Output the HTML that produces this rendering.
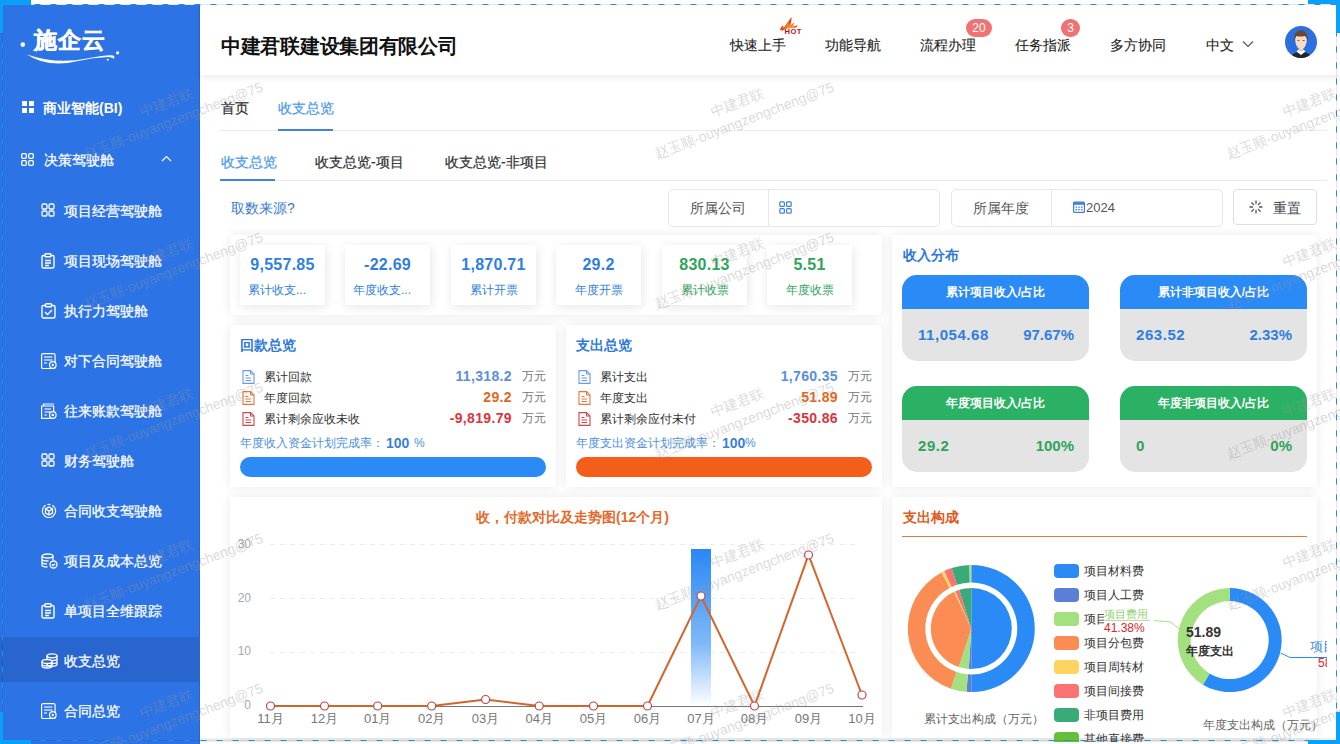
<!DOCTYPE html>
<html><head><meta charset="utf-8">
<style>
*{margin:0;padding:0;box-sizing:border-box}
html,body{width:1340px;height:744px;overflow:hidden;background:#fff;font-family:"Liberation Sans",sans-serif;position:relative}
.a{position:absolute;white-space:nowrap}
#side{position:absolute;left:0;top:5px;width:200px;height:739px;background:#2c73e6;color:#fff}
.si{position:absolute;left:0;width:200px;height:45px}
.si .t{position:absolute;left:64px;top:0;font-size:14px;line-height:45px;color:#fff}
.si svg{position:absolute;left:40px;top:15px}
#hdr{position:absolute;left:200px;top:5px;width:1140px;height:70px;background:#fff;box-shadow:0 3px 6px rgba(0,0,0,0.07)}
.nav{position:absolute;top:30px;font-size:14px;color:#222;line-height:20px;-webkit-text-stroke:0.1px #222}
.badge{position:absolute;height:18px;border-radius:9px;background:#f07373;color:#fff;font-size:12px;line-height:18px;text-align:center}
.tab{position:absolute;font-size:14px;line-height:20px;color:#303133;-webkit-text-stroke:0.2px currentColor}
.wm{position:absolute;width:220px;height:38px;text-align:center;font-size:14px;line-height:19px;color:rgba(150,150,150,0.36);transform:rotate(-21deg);white-space:nowrap;pointer-events:none}
.card{position:absolute;background:#fff;box-shadow:0 0 10px rgba(0,0,0,0.085)}
</style></head><body>
<!-- SIDEBAR -->
<div id="side">
  <div class="a" style="left:34px;top:20px;font-size:23px;font-weight:bold;line-height:30px;letter-spacing:1px;-webkit-text-stroke:0.4px #fff">施企云</div>
  <svg class="a" style="left:18px;top:30px" width="110" height="40" viewBox="0 0 110 40">
    <circle cx="4.8" cy="9.6" r="2.3" fill="#fff"/>
    <circle cx="99.6" cy="17.8" r="1.6" fill="#fff"/>
    <circle cx="89.8" cy="24.8" r="1" fill="#fff"/>
    <path d="M8.5 19.2 Q38 30 70 23.2 Q88 19.8 94 20.3 Q97.8 21.3 95.8 24.2 Q95.2 22.2 90 22 Q75 22.5 60 26 Q30 33.5 8.5 19.2Z" fill="#fff"/>
  </svg>
  <!-- BI -->
  <svg class="a" style="left:22px;top:96px" width="12" height="12" viewBox="0 0 12 12"><rect x="0" y="0" width="5" height="5" fill="#fff"/><rect x="7" y="0" width="5" height="5" fill="#fff"/><rect x="0" y="7" width="5" height="5" fill="#fff"/><rect x="7" y="7" width="5" height="5" fill="#fff"/></svg>
  <div class="a" style="left:43px;top:93px;font-size:14px;font-weight:bold;line-height:20px">商业智能(BI)</div>
  <!-- 决策驾驶舱 -->
  <svg class="a" style="left:21px;top:148px" width="13" height="13" viewBox="0 0 13 13" fill="none" stroke="#fff" stroke-width="1.3"><rect x="0.7" y="0.7" width="4.6" height="4.6" rx="1"/><rect x="7.7" y="0.7" width="4.6" height="4.6" rx="1"/><rect x="0.7" y="7.7" width="4.6" height="4.6" rx="1"/><rect x="7.7" y="7.7" width="4.6" height="4.6" rx="1"/></svg>
  <div class="a" style="left:44px;top:145px;font-size:14px;line-height:20px;-webkit-text-stroke:0.25px #fff">决策驾驶舱</div>
  <svg class="a" style="left:161px;top:150px" width="11" height="7" viewBox="0 0 11 7" fill="none" stroke="#fff" stroke-width="1.2"><path d="M1 6 L5.5 1.5 L10 6"/></svg>
</div>
<div class="a" style="left:199px;top:5px;width:1px;height:739px;background:#2a66cc"></div>
<!-- side items -->
<div class="a" style="left:41px;top:203px;height:16px"><svg width="14" height="14" viewBox="0 0 14 14" fill="none" stroke="#fff" stroke-width="1.3"><rect x="1" y="1" width="5" height="5" rx="1.2"/><rect x="8" y="1" width="5" height="5" rx="1.2"/><rect x="1" y="8" width="5" height="5" rx="1.2"/><rect x="8" y="8" width="5" height="5" rx="1.2"/></svg></div>
<div class="a" style="left:64px;top:201px;font-size:14px;line-height:20px;color:#fff;-webkit-text-stroke:0.25px #fff">项目经营驾驶舱</div>
<div class="a" style="left:41px;top:253px;height:16px"><svg width="14" height="16" viewBox="0 0 14 16" fill="none" stroke="#fff" stroke-width="1.4"><rect x="1" y="2.5" width="12" height="12.5" rx="1.5"/><rect x="4" y="0.8" width="6" height="3" rx="0.8" fill="#2c73e6"/><path d="M4 7.5h6M4 10h6M4 12.5h4"/></svg></div>
<div class="a" style="left:64px;top:251px;font-size:14px;line-height:20px;color:#fff;-webkit-text-stroke:0.25px #fff">项目现场驾驶舱</div>
<div class="a" style="left:41px;top:303px;height:16px"><svg width="15" height="16" viewBox="0 0 15 16" fill="none" stroke="#fff" stroke-width="1.4"><rect x="1" y="2.5" width="13" height="12.5" rx="1.5"/><rect x="4.5" y="0.8" width="6" height="3" rx="0.8" fill="#2c73e6"/><path d="M4 9l2.5 2.5L11 7"/></svg></div>
<div class="a" style="left:64px;top:301px;font-size:14px;line-height:20px;color:#fff;-webkit-text-stroke:0.25px #fff">执行力驾驶舱</div>
<div class="a" style="left:41px;top:353px;height:16px"><svg width="16" height="16" viewBox="0 0 16 16" fill="none" stroke="#fff" stroke-width="1.2"><rect x="0.6" y="0.6" width="13.5" height="15" rx="1.5"/><path d="M3 4h8.5M3 7h8.5M3 10h3" stroke-width="1.6" stroke-opacity="0.75"/><circle cx="11.8" cy="12" r="3.3" fill="#2c73e6"/><path d="M11.8 10.6l1.4 1.4-1.4 1.4-1.4-1.4z" fill="#fff" stroke="none"/></svg></div>
<div class="a" style="left:64px;top:351px;font-size:14px;line-height:20px;color:#fff;-webkit-text-stroke:0.25px #fff">对下合同驾驶舱</div>
<div class="a" style="left:41px;top:403px;height:16px"><svg width="16" height="16" viewBox="0 0 16 16" fill="none" stroke="#fff" stroke-width="1.2"><path d="M2.5 2.5V1h10.5M0.6 3h12v12.4H0.6z"/><path d="M3.5 6h6.5M3.5 9h6.5M3.5 12h2.5" stroke-width="1.5" stroke-opacity="0.75"/><circle cx="11.8" cy="12" r="3.3" fill="#2c73e6"/><circle cx="11.8" cy="12" r="1.3" fill="#fff" stroke="none"/></svg></div>
<div class="a" style="left:64px;top:401px;font-size:14px;line-height:20px;color:#fff;-webkit-text-stroke:0.25px #fff">往来账款驾驶舱</div>
<div class="a" style="left:41px;top:453px;height:16px"><svg width="14" height="14" viewBox="0 0 14 14" fill="none" stroke="#fff" stroke-width="1.3"><rect x="1" y="1" width="5" height="5" rx="1.2"/><rect x="8" y="1" width="5" height="5" rx="1.2"/><rect x="1" y="8" width="5" height="5" rx="1.2"/><rect x="8" y="8" width="5" height="5" rx="1.2"/></svg></div>
<div class="a" style="left:64px;top:451px;font-size:14px;line-height:20px;color:#fff;-webkit-text-stroke:0.25px #fff">财务驾驶舱</div>
<div class="a" style="left:41px;top:503px;height:16px"><svg width="16" height="15" viewBox="0 0 16 15" fill="none" stroke="#fff" stroke-width="1.3"><path d="M2.5 4.5A6.5 6.5 0 1 0 13.5 4.5"/><path d="M13.5 4.5A6.5 6.5 0 0 0 2.5 4.5" stroke-dasharray="3 2"/><path d="M8 4l3.5 2v4L8 12l-3.5-2V6z"/><path d="M4.5 6L8 8l3.5-2M8 8v4"/></svg></div>
<div class="a" style="left:64px;top:501px;font-size:14px;line-height:20px;color:#fff;-webkit-text-stroke:0.25px #fff">合同收支驾驶舱</div>
<div class="a" style="left:41px;top:553px;height:16px"><svg width="17" height="16" viewBox="0 0 17 16" fill="none" stroke="#fff" stroke-width="1.3"><ellipse cx="6.5" cy="3" rx="5.5" ry="2"/><path d="M1 3v9c0 1.1 2.5 2 5.5 2M1 6c0 1.1 2.5 2 5.5 2h1M1 9c0 1.1 2.5 2 5 2M12 3v4"/><circle cx="12.5" cy="11.5" r="3.5"/><path d="M10.8 11.5l1.2 1.2 2-2"/></svg></div>
<div class="a" style="left:64px;top:551px;font-size:14px;line-height:20px;color:#fff;-webkit-text-stroke:0.25px #fff">项目及成本总览</div>
<div class="a" style="left:41px;top:603px;height:16px"><svg width="14" height="16" viewBox="0 0 14 16" fill="none" stroke="#fff" stroke-width="1.4"><rect x="1" y="2.5" width="12" height="12.5" rx="1.5"/><rect x="4" y="0.8" width="6" height="3" rx="0.8" fill="#2c73e6"/><path d="M4 7.5h6M4 10h6M4 12.5h4"/></svg></div>
<div class="a" style="left:64px;top:601px;font-size:14px;line-height:20px;color:#fff;-webkit-text-stroke:0.25px #fff">单项目全维跟踪</div>
<div class="a" style="left:0;top:637px;width:200px;height:45px;background:#2865cf"></div>
<div class="a" style="left:41px;top:653px;height:16px"><svg width="17" height="16" viewBox="0 0 17 16" fill="none" stroke="#fff" stroke-width="1.3"><ellipse cx="11" cy="2.8" rx="5" ry="2"/><path d="M6 2.8v8.5c0 1.1 2.2 2 5 2s5-.9 5-2V2.8M6 5.6c0 1.1 2.2 2 5 2s5-.9 5-2M6 8.5c0 1.1 2.2 2 5 2s5-.9 5-2"/><ellipse cx="6" cy="8.5" rx="5" ry="2" fill="#2865cf"/><path d="M1 8.5v4.5c0 1.1 2.2 2 5 2s5-.9 5-2V8.5M1 11c0 1.1 2.2 2 5 2s5-.9 5-2"/></svg></div>
<div class="a" style="left:64px;top:651px;font-size:14px;line-height:20px;color:#fff;-webkit-text-stroke:0.25px #fff">收支总览</div>
<div class="a" style="left:41px;top:703px;height:16px"><svg width="16" height="16" viewBox="0 0 16 16" fill="none" stroke="#fff" stroke-width="1.2"><rect x="0.6" y="0.6" width="13.5" height="15" rx="1.5"/><path d="M3 4h8.5M3 7h8.5M3 10h3" stroke-width="1.6" stroke-opacity="0.75"/><circle cx="11.8" cy="12" r="3.3" fill="#2c73e6"/><path d="M11.8 10.6l1.4 1.4-1.4 1.4-1.4-1.4z" fill="#fff" stroke="none"/></svg></div>
<div class="a" style="left:64px;top:701px;font-size:14px;line-height:20px;color:#fff;-webkit-text-stroke:0.25px #fff">合同总览</div>
<!-- HEADER -->
<div id="hdr">
  <div class="a" style="left:21px;top:28px;font-size:20px;font-weight:bold;color:#111;line-height:26px;letter-spacing:-0.3px">中建君联建设集团有限公司</div>
</div>

<!-- NAV -->
<div class="nav" style="left:730px;top:35px">快速上手</div>
<svg class="a" style="left:770px;top:10px" width="40" height="30" viewBox="0 0 40 30">
  <defs><radialGradient id="fl" cx="0.55" cy="0.75" r="0.6"><stop offset="0" stop-color="#f9a020"/><stop offset="1" stop-color="#e3261a"/></radialGradient></defs>
  <path d="M10 19.8 L12.3 15.2 L13.6 17.6 C16 15 18.5 11 21.6 7 C21.2 10.5 21.3 13 20.6 15.3 L24.6 12.2 L22.3 16.4 L27.8 15.2 L26.3 17.6 L15.5 18.8 L12.5 20.8 Z" fill="url(#fl)"/>
  <text x="14.6" y="24.2" font-family="Liberation Sans" font-weight="bold" font-size="7.6" letter-spacing="0.4" fill="#b8101c">HOT</text>
</svg>
<div class="nav" style="left:825px;top:35px">功能导航</div>
<div class="nav" style="left:920px;top:35px">流程办理</div>
<div class="badge" style="left:966px;top:19px;width:26px">20</div>
<div class="nav" style="left:1015px;top:35px">任务指派</div>
<div class="badge" style="left:1061px;top:19px;width:19px">3</div>
<div class="nav" style="left:1110px;top:35px">多方协同</div>
<div class="nav" style="left:1206px;top:35px">中文</div>
<svg class="a" style="left:1242px;top:40px" width="12" height="9" viewBox="0 0 12 9" fill="none" stroke="#555" stroke-width="1.2"><path d="M1 1.5l5 5 5-5"/></svg>
<svg class="a" style="left:1285px;top:26px" width="32" height="32" viewBox="0 0 32 32">
  <defs><clipPath id="av"><circle cx="16" cy="16" r="16"/></clipPath></defs>
  <circle cx="16" cy="16" r="16" fill="#2b6fe0"/>
  <g clip-path="url(#av)">
    <path d="M5 33 C6 28 10 26 16 26 C22 26 26 28 27 33Z" fill="#262626"/>
    <path d="M11.5 25.5 L16 29 L20.5 25.5 L18.5 23.5 L13.5 23.5Z" fill="#fff"/>
    <rect x="14" y="20" width="4" height="5" fill="#efc9a6"/>
    <path d="M10.2 13 C10.2 19 12.5 23 16 23.5 C19.5 23 21.8 19 21.8 13 C21.8 10 19.5 8 16 8 C12.5 8 10.2 10 10.2 13Z" fill="#f6dcc2"/>
    <path d="M9.3 16 C8.5 9 11 4.2 16 4.2 C21 4.2 23.5 9 22.7 16 C22 12 21 10.5 19.5 10 C17 10.8 13 10.8 11.5 10 C10.5 11 9.8 13 9.3 16Z" fill="#6e4531"/>
    <g fill="#5a3a2a"><rect x="12.3" y="14.2" width="2.2" height="0.9" rx="0.4"/><rect x="17.5" y="14.2" width="2.2" height="0.9" rx="0.4"/></g>
  </g>
</svg>

<!-- TABS -->
<div class="tab" style="left:221px;top:98px">首页</div>
<div class="tab" style="left:278px;top:98px;color:#4a98ec">收支总览</div>
<div class="a" style="left:220px;top:130px;width:1107px;height:1px;background:#ebebeb"></div>
<div class="a" style="left:278px;top:129px;width:55px;height:2px;background:#3c85d8"></div>
<div class="tab" style="left:221px;top:152px;color:#4a98ec">收支总览</div>
<div class="tab" style="left:315px;top:152px">收支总览-项目</div>
<div class="tab" style="left:445px;top:152px">收支总览-非项目</div>
<div class="a" style="left:220px;top:180px;width:1107px;height:1px;background:#ebebeb"></div>
<div class="a" style="left:220px;top:179px;width:55px;height:2px;background:#3c85d8"></div>

<!-- FILTER -->
<div class="a" style="left:231px;top:198px;font-size:14px;line-height:20px;color:#3b78d6">取数来源?</div>
<div class="a" style="left:668px;top:189px;width:272px;height:38px;border:1px solid #e4e7ed;border-radius:5px"></div>
<div class="a" style="left:768px;top:190px;width:1px;height:36px;background:#e4e7ed"></div>
<div class="a" style="left:690px;top:198px;font-size:14px;line-height:20px;color:#555">所属公司</div>
<svg class="a" style="left:779px;top:201px" width="13" height="13" viewBox="0 0 13 13" fill="none" stroke="#3d7fe0" stroke-width="1.2"><rect x="0.8" y="0.8" width="4.6" height="4.6" rx="1"/><rect x="7.6" y="0.8" width="4.6" height="4.6" rx="1"/><rect x="0.8" y="7.6" width="4.6" height="4.6" rx="1"/><rect x="7.6" y="7.6" width="4.6" height="4.6" rx="1"/></svg>
<div class="a" style="left:951px;top:189px;width:272px;height:38px;border:1px solid #e4e7ed;border-radius:5px"></div>
<div class="a" style="left:1051px;top:190px;width:1px;height:36px;background:#e4e7ed"></div>
<div class="a" style="left:973px;top:198px;font-size:14px;line-height:20px;color:#555">所属年度</div>
<svg class="a" style="left:1073px;top:201px" width="12" height="12" viewBox="0 0 12 12"><rect x="0.6" y="1.2" width="10.8" height="10.2" rx="1" fill="none" stroke="#3d7fe0" stroke-width="1.2"/><rect x="0.6" y="1.2" width="10.8" height="2.6" fill="#3d7fe0"/><g fill="#3d7fe0"><rect x="2.5" y="5.5" width="1.5" height="1.3"/><rect x="5.25" y="5.5" width="1.5" height="1.3"/><rect x="8" y="5.5" width="1.5" height="1.3"/><rect x="2.5" y="8" width="1.5" height="1.3"/><rect x="5.25" y="8" width="1.5" height="1.3"/><rect x="8" y="8" width="1.5" height="1.3"/></g></svg>
<div class="a" style="left:1086px;top:199px;font-size:13px;line-height:18px;color:#555">2024</div>
<div class="a" style="left:1233px;top:189px;width:84px;height:36px;border:1px solid #dcdfe6;border-radius:4px"></div>
<svg class="a" style="left:1249px;top:200px" width="14" height="14" viewBox="0 0 14 14" fill="none" stroke="#555" stroke-width="1.3" stroke-linecap="round"><path d="M7 1v2.5M7 10.5V13M1 7h2.5M10.5 7H13M2.8 2.8l1.8 1.8M9.4 9.4l1.8 1.8M2.8 11.2l1.8-1.8M9.4 4.6l1.8-1.8"/></svg>
<div class="a" style="left:1273px;top:198px;font-size:14px;line-height:20px;color:#444">重置</div>


<!-- STAT PANEL -->
<div class="card" style="left:230px;top:235px;width:652px;height:80px"></div>
<div class="card" style="left:240px;top:245px;width:85px;height:60px;box-shadow:1px 2px 10px rgba(0,0,0,0.1)"></div>
<div class="a" style="left:240px;top:255px;width:85px;text-align:center;font-size:16px;font-weight:bold;line-height:20px;letter-spacing:0.25px;color:#2f7fe0">9,557.85</div>
<div class="a" style="left:240px;top:282px;width:85px;text-align:left;padding-left:8px;font-size:12px;line-height:16px;color:#2f7fe0">累计收支...</div>
<div class="card" style="left:345px;top:245px;width:85px;height:60px;box-shadow:1px 2px 10px rgba(0,0,0,0.1)"></div>
<div class="a" style="left:345px;top:255px;width:85px;text-align:center;font-size:16px;font-weight:bold;line-height:20px;letter-spacing:0.25px;color:#2f7fe0">-22.69</div>
<div class="a" style="left:345px;top:282px;width:85px;text-align:left;padding-left:8px;font-size:12px;line-height:16px;color:#2f7fe0">年度收支...</div>
<div class="card" style="left:451px;top:245px;width:85px;height:60px;box-shadow:1px 2px 10px rgba(0,0,0,0.1)"></div>
<div class="a" style="left:451px;top:255px;width:85px;text-align:center;font-size:16px;font-weight:bold;line-height:20px;letter-spacing:0.25px;color:#2f7fe0">1,870.71</div>
<div class="a" style="left:451px;top:282px;width:85px;text-align:center;font-size:12px;line-height:16px;color:#2f7fe0">累计开票</div>
<div class="card" style="left:556px;top:245px;width:85px;height:60px;box-shadow:1px 2px 10px rgba(0,0,0,0.1)"></div>
<div class="a" style="left:556px;top:255px;width:85px;text-align:center;font-size:16px;font-weight:bold;line-height:20px;letter-spacing:0.25px;color:#2f7fe0">29.2</div>
<div class="a" style="left:556px;top:282px;width:85px;text-align:center;font-size:12px;line-height:16px;color:#2f7fe0">年度开票</div>
<div class="card" style="left:662px;top:245px;width:85px;height:60px;box-shadow:1px 2px 10px rgba(0,0,0,0.1)"></div>
<div class="a" style="left:662px;top:255px;width:85px;text-align:center;font-size:16px;font-weight:bold;line-height:20px;letter-spacing:0.25px;color:#2ea55a">830.13</div>
<div class="a" style="left:662px;top:282px;width:85px;text-align:center;font-size:12px;line-height:16px;color:#2ea55a">累计收票</div>
<div class="card" style="left:767px;top:245px;width:85px;height:60px;box-shadow:1px 2px 10px rgba(0,0,0,0.1)"></div>
<div class="a" style="left:767px;top:255px;width:85px;text-align:center;font-size:16px;font-weight:bold;line-height:20px;letter-spacing:0.25px;color:#2ea55a">5.51</div>
<div class="a" style="left:767px;top:282px;width:85px;text-align:center;font-size:12px;line-height:16px;color:#2ea55a">年度收票</div>
<div class="card" style="left:230px;top:325px;width:326px;height:162px"></div>
<div class="a" style="left:240px;top:335px;font-size:14px;font-weight:bold;line-height:20px;color:#2f7ad8">回款总览</div>
<svg class="a" style="left:242px;top:370px" width="13" height="14" viewBox="0 0 13 14" fill="none" stroke="#6b9be0" stroke-width="1.1"><path d="M1 .6h7.5L12 4v9.4H1z"/><path d="M8.5 .6V4H12"/><path d="M3.5 5.5h3M3.5 8h5.5M3.5 10.5h5.5"/></svg>
<div class="a" style="left:264px;top:369px;font-size:12px;line-height:16px;color:#303133">累计回款</div>
<div class="a" style="left:312px;top:367px;width:200px;text-align:right;font-size:14px;font-weight:bold;line-height:18px;letter-spacing:0.35px;color:#5b8ee0">11,318.2</div>
<div class="a" style="left:522px;top:368px;font-size:12px;line-height:16px;color:#777">万元</div>
<svg class="a" style="left:242px;top:391px" width="13" height="14" viewBox="0 0 13 14" fill="none" stroke="#e07a3a" stroke-width="1.1"><path d="M1 .6h7.5L12 4v9.4H1z"/><path d="M8.5 .6V4H12"/><path d="M3.5 5.5h3M3.5 8h5.5M3.5 10.5h5.5"/></svg>
<div class="a" style="left:264px;top:390px;font-size:12px;line-height:16px;color:#303133">年度回款</div>
<div class="a" style="left:312px;top:388px;width:200px;text-align:right;font-size:14px;font-weight:bold;line-height:18px;letter-spacing:0.35px;color:#e2671e">29.2</div>
<div class="a" style="left:522px;top:389px;font-size:12px;line-height:16px;color:#777">万元</div>
<svg class="a" style="left:242px;top:412px" width="13" height="14" viewBox="0 0 13 14" fill="none" stroke="#d0454a" stroke-width="1.1"><path d="M1 .6h7.5L12 4v9.4H1z"/><path d="M8.5 .6V4H12"/><path d="M3.5 5.5h3M3.5 8h5.5M3.5 10.5h5.5"/></svg>
<div class="a" style="left:264px;top:411px;font-size:12px;line-height:16px;color:#303133">累计剩余应收未收</div>
<div class="a" style="left:312px;top:409px;width:200px;text-align:right;font-size:14px;font-weight:bold;line-height:18px;letter-spacing:0.35px;color:#d9363e">-9,819.79</div>
<div class="a" style="left:522px;top:410px;font-size:12px;line-height:16px;color:#777">万元</div>
<div class="a" style="left:240px;top:435px;font-size:12px;line-height:16px;color:#4a8fe0">年度收入资金计划完成率：</div><div class="a" style="left:386px;top:434px;font-size:14px;font-weight:bold;line-height:18px;color:#3a80d8">100</div><div class="a" style="left:414px;top:435px;font-size:12px;line-height:16px;color:#4a8fe0">%</div>
<div class="a" style="left:240px;top:457px;width:306px;height:20px;border-radius:10px;background:#2b8af5"></div>
<div class="card" style="left:566px;top:325px;width:316px;height:162px"></div>
<div class="a" style="left:576px;top:335px;font-size:14px;font-weight:bold;line-height:20px;color:#2f7ad8">支出总览</div>
<svg class="a" style="left:578px;top:370px" width="13" height="14" viewBox="0 0 13 14" fill="none" stroke="#6b9be0" stroke-width="1.1"><path d="M1 .6h7.5L12 4v9.4H1z"/><path d="M8.5 .6V4H12"/><path d="M3.5 5.5h3M3.5 8h5.5M3.5 10.5h5.5"/></svg>
<div class="a" style="left:600px;top:369px;font-size:12px;line-height:16px;color:#303133">累计支出</div>
<div class="a" style="left:638px;top:367px;width:200px;text-align:right;font-size:14px;font-weight:bold;line-height:18px;letter-spacing:0.35px;color:#5b8ee0">1,760.35</div>
<div class="a" style="left:848px;top:368px;font-size:12px;line-height:16px;color:#777">万元</div>
<svg class="a" style="left:578px;top:391px" width="13" height="14" viewBox="0 0 13 14" fill="none" stroke="#e07a3a" stroke-width="1.1"><path d="M1 .6h7.5L12 4v9.4H1z"/><path d="M8.5 .6V4H12"/><path d="M3.5 5.5h3M3.5 8h5.5M3.5 10.5h5.5"/></svg>
<div class="a" style="left:600px;top:390px;font-size:12px;line-height:16px;color:#303133">年度支出</div>
<div class="a" style="left:638px;top:388px;width:200px;text-align:right;font-size:14px;font-weight:bold;line-height:18px;letter-spacing:0.35px;color:#e2671e">51.89</div>
<div class="a" style="left:848px;top:389px;font-size:12px;line-height:16px;color:#777">万元</div>
<svg class="a" style="left:578px;top:412px" width="13" height="14" viewBox="0 0 13 14" fill="none" stroke="#d0454a" stroke-width="1.1"><path d="M1 .6h7.5L12 4v9.4H1z"/><path d="M8.5 .6V4H12"/><path d="M3.5 5.5h3M3.5 8h5.5M3.5 10.5h5.5"/></svg>
<div class="a" style="left:600px;top:411px;font-size:12px;line-height:16px;color:#303133">累计剩余应付未付</div>
<div class="a" style="left:638px;top:409px;width:200px;text-align:right;font-size:14px;font-weight:bold;line-height:18px;letter-spacing:0.35px;color:#d9363e">-350.86</div>
<div class="a" style="left:848px;top:410px;font-size:12px;line-height:16px;color:#777">万元</div>
<div class="a" style="left:576px;top:435px;font-size:12px;line-height:16px;color:#4a8fe0">年度支出资金计划完成率：</div><div class="a" style="left:722px;top:434px;font-size:14px;font-weight:bold;line-height:18px;color:#3a80d8">100</div><div class="a" style="left:745px;top:435px;font-size:12px;line-height:16px;color:#4a8fe0">%</div>
<div class="a" style="left:576px;top:457px;width:296px;height:20px;border-radius:10px;background:#f35f1b"></div>
<div class="card" style="left:892px;top:235px;width:425px;height:252px"></div>
<div class="a" style="left:903px;top:245px;font-size:14px;font-weight:bold;line-height:20px;color:#2f7ad8">收入分布</div>
<div class="a" style="left:902px;top:275px;width:187px;height:86px;border-radius:15px;background:#e4e4e4;overflow:hidden"><div style="height:34px;background:#2a8af6;color:#fff;font-size:12px;font-weight:bold;line-height:34px;text-align:center">累计项目收入/占比</div></div>
<div class="a" style="left:918px;top:326px;font-size:15px;font-weight:bold;line-height:18px;letter-spacing:0.55px;color:#2f7fe0">11,054.68</div>
<div class="a" style="left:913px;top:326px;width:161px;text-align:right;font-size:15px;font-weight:bold;line-height:18px;color:#2f7fe0">97.67%</div>
<div class="a" style="left:1120px;top:275px;width:187px;height:86px;border-radius:15px;background:#e4e4e4;overflow:hidden"><div style="height:34px;background:#2a8af6;color:#fff;font-size:12px;font-weight:bold;line-height:34px;text-align:center">累计非项目收入/占比</div></div>
<div class="a" style="left:1136px;top:326px;font-size:15px;font-weight:bold;line-height:18px;letter-spacing:0.55px;color:#2f7fe0">263.52</div>
<div class="a" style="left:1131px;top:326px;width:161px;text-align:right;font-size:15px;font-weight:bold;line-height:18px;color:#2f7fe0">2.33%</div>
<div class="a" style="left:902px;top:386px;width:187px;height:86px;border-radius:15px;background:#e4e4e4;overflow:hidden"><div style="height:34px;background:#2ab164;color:#fff;font-size:12px;font-weight:bold;line-height:34px;text-align:center">年度项目收入/占比</div></div>
<div class="a" style="left:918px;top:437px;font-size:15px;font-weight:bold;line-height:18px;letter-spacing:0.55px;color:#2ea55a">29.2</div>
<div class="a" style="left:913px;top:437px;width:161px;text-align:right;font-size:15px;font-weight:bold;line-height:18px;color:#2ea55a">100%</div>
<div class="a" style="left:1120px;top:386px;width:187px;height:86px;border-radius:15px;background:#e4e4e4;overflow:hidden"><div style="height:34px;background:#2ab164;color:#fff;font-size:12px;font-weight:bold;line-height:34px;text-align:center">年度非项目收入/占比</div></div>
<div class="a" style="left:1136px;top:437px;font-size:15px;font-weight:bold;line-height:18px;letter-spacing:0.55px;color:#2ea55a">0</div>
<div class="a" style="left:1131px;top:437px;width:161px;text-align:right;font-size:15px;font-weight:bold;line-height:18px;color:#2ea55a">0%</div>


<!-- CHART -->
<div class="a" style="left:200px;top:738px;width:1137px;height:4px;background:#efefef"></div>
<div class="card" style="left:230px;top:497px;width:652px;height:241px"></div>
<div class="a" style="left:476px;top:507px;font-size:14px;font-weight:bold;line-height:20px;color:#e46a2a">收，付款对比及走势图(12个月)</div>
<svg class="a" style="left:230px;top:497px" width="652" height="247" viewBox="230 497 652 247">
  <defs><linearGradient id="bg1" x1="0" y1="0" x2="0" y2="1"><stop offset="0" stop-color="#2a87f5"/><stop offset="0.6" stop-color="#7fb8f8"/><stop offset="1" stop-color="#ffffff"/></linearGradient></defs>
  <g stroke="#ececec" stroke-width="1" stroke-dasharray="5 5">
    <line x1="270" y1="544.5" x2="860" y2="544.5"/>
    <line x1="270" y1="598.5" x2="860" y2="598.5"/>
    <line x1="270" y1="652.5" x2="860" y2="652.5"/>
  </g>
  <g font-family="Liberation Sans" font-size="12" fill="#a0a8b8" text-anchor="end">
    <text x="251" y="548">30</text><text x="251" y="602">20</text><text x="251" y="655">10</text><text x="251" y="709">0</text>
  </g>
  <rect x="691" y="549" width="20" height="157" fill="url(#bg1)"/>
  <line x1="270" y1="706.5" x2="863" y2="706.5" stroke="#777" stroke-width="1"/>
  <polyline points="270.5,706 324.5,706 377.7,706 431.7,706 485.6,699.5 539.2,706 593.5,706 647.5,706 701,596 754.5,706 808.5,555 862,695" fill="none" stroke="#d4652a" stroke-width="2"/>
  <g fill="#fff" stroke="#b84a48" stroke-width="1.2">
    <circle cx="270.5" cy="706" r="4"/><circle cx="324.5" cy="706" r="4"/><circle cx="377.7" cy="706" r="4"/><circle cx="431.7" cy="706" r="4"/><circle cx="485.6" cy="699.5" r="4"/><circle cx="539.2" cy="706" r="4"/><circle cx="593.5" cy="706" r="4"/><circle cx="647.5" cy="706" r="4"/><circle cx="701" cy="596" r="4"/><circle cx="754.5" cy="706" r="4"/><circle cx="808.5" cy="555" r="4"/><circle cx="862" cy="695" r="4"/>
  </g>
  <g font-family="Liberation Sans" font-size="13" fill="#777" text-anchor="middle">
    <text x="270.5" y="722.5">11月</text>
    <text x="324.5" y="722.5">12月</text>
    <text x="377.7" y="722.5">01月</text>
    <text x="431.7" y="722.5">02月</text>
    <text x="485.6" y="722.5">03月</text>
    <text x="539.2" y="722.5">04月</text>
    <text x="593.5" y="722.5">05月</text>
    <text x="647.5" y="722.5">06月</text>
    <text x="701" y="722.5">07月</text>
    <text x="754.5" y="722.5">08月</text>
    <text x="808.5" y="722.5">09月</text>
    <text x="862" y="722.5">10月</text>
  </g>
</svg>

<!-- EXPENSE COMPOSITION -->
<div class="card" style="left:892px;top:497px;width:425px;height:241px"></div>
<div class="a" style="left:903px;top:507px;font-size:14px;font-weight:bold;line-height:20px;color:#e05a1e">支出构成</div>
<div class="a" style="left:902px;top:536px;width:405px;height:1px;background:#e8773a"></div>
<div class="a" style="left:1054px;top:564.2px;width:25px;height:14px;border-radius:4px;background:#2a8af6"></div>
<div class="a" style="left:1084px;top:563.2px;font-size:12px;line-height:16px;color:#333">项目材料费</div>
<div class="a" style="left:1054px;top:588.2px;width:25px;height:14px;border-radius:4px;background:#5b7fd9"></div>
<div class="a" style="left:1084px;top:587.2px;font-size:12px;line-height:16px;color:#333">项目人工费</div>
<div class="a" style="left:1054px;top:612.2px;width:25px;height:14px;border-radius:4px;background:#a3e07f"></div>
<div class="a" style="left:1084px;top:611.2px;font-size:12px;line-height:16px;color:#333">项目费用</div>
<div class="a" style="left:1054px;top:636.2px;width:25px;height:14px;border-radius:4px;background:#fb8d54"></div>
<div class="a" style="left:1084px;top:635.2px;font-size:12px;line-height:16px;color:#333">项目分包费</div>
<div class="a" style="left:1054px;top:660.2px;width:25px;height:14px;border-radius:4px;background:#fdd55e"></div>
<div class="a" style="left:1084px;top:659.2px;font-size:12px;line-height:16px;color:#333">项目周转材</div>
<div class="a" style="left:1054px;top:684.2px;width:25px;height:14px;border-radius:4px;background:#f97373"></div>
<div class="a" style="left:1084px;top:683.2px;font-size:12px;line-height:16px;color:#333">项目间接费</div>
<div class="a" style="left:1054px;top:708.2px;width:25px;height:14px;border-radius:4px;background:#3aab78"></div>
<div class="a" style="left:1084px;top:707.2px;font-size:12px;line-height:16px;color:#333">非项目费用</div>
<div class="a" style="left:1054px;top:732.2px;width:25px;height:14px;border-radius:4px;background:#66bf3c"></div>
<div class="a" style="left:1084px;top:731.2px;font-size:12px;line-height:16px;color:#333">其他直接费</div>
<svg class="a" style="left:892px;top:537px" width="435" height="207" viewBox="892 537 435 207">
<path d="M971.30 565.00 A63.5 63.5 0 0 1 971.30 692.00 L971.30 674.50 A46 46 0 0 0 971.30 582.50Z" fill="#2a8af6"/>
<path d="M971.30 692.00 A63.5 63.5 0 0 1 966.52 691.82 L967.83 674.37 A46 46 0 0 0 971.30 674.50Z" fill="#5b7fd9"/>
<path d="M966.52 691.82 A63.5 63.5 0 0 1 950.92 688.64 L956.54 672.07 A46 46 0 0 0 967.83 674.37Z" fill="#a3e07f"/>
<path d="M950.92 688.64 A63.5 63.5 0 0 1 941.41 572.47 L949.65 587.91 A46 46 0 0 0 956.54 672.07Z" fill="#fb8d54"/>
<path d="M941.41 572.47 A63.5 63.5 0 0 1 944.26 571.04 L951.71 586.88 A46 46 0 0 0 949.65 587.91Z" fill="#fdd55e"/>
<path d="M944.26 571.04 A63.5 63.5 0 0 1 951.68 568.11 L957.09 584.75 A46 46 0 0 0 951.71 586.88Z" fill="#f97373"/>
<path d="M951.68 568.11 A63.5 63.5 0 0 1 969.31 565.03 L969.86 582.52 A46 46 0 0 0 957.09 584.75Z" fill="#3aab78"/>
<path d="M969.31 565.03 A63.5 63.5 0 0 1 971.30 565.00 L971.30 582.50 A46 46 0 0 0 969.86 582.52Z" fill="#a3e07f"/>
<path d="M971.30 588.00 A40.5 40.5 0 0 1 971.30 669.00 L971.30 628.51 A0.01 0.01 0 0 0 971.30 628.49Z" fill="#2a8af6"/>
<path d="M971.30 669.00 A40.5 40.5 0 0 1 968.76 668.92 L971.30 628.51 A0.01 0.01 0 0 0 971.30 628.51Z" fill="#5b7fd9"/>
<path d="M968.76 668.92 A40.5 40.5 0 0 1 958.78 667.02 L971.30 628.51 A0.01 0.01 0 0 0 971.30 628.51Z" fill="#a3e07f"/>
<path d="M958.78 667.02 A40.5 40.5 0 0 1 954.06 591.85 L971.30 628.49 A0.01 0.01 0 0 0 971.30 628.51Z" fill="#fb8d54"/>
<path d="M954.06 591.85 A40.5 40.5 0 0 1 955.45 591.23 L971.30 628.49 A0.01 0.01 0 0 0 971.30 628.49Z" fill="#fdd55e"/>
<path d="M955.45 591.23 A40.5 40.5 0 0 1 959.27 589.83 L971.30 628.49 A0.01 0.01 0 0 0 971.30 628.49Z" fill="#f97373"/>
<path d="M959.27 589.83 A40.5 40.5 0 0 1 971.30 588.00 L971.30 628.49 A0.01 0.01 0 0 0 971.30 628.49Z" fill="#3aab78"/>
<path d="M1229.70 588.10 A52 52 0 1 1 1202.89 684.66 L1209.59 673.52 A39 39 0 1 0 1229.70 601.10Z" fill="#2a8af6"/>
<path d="M1202.89 684.66 A52 52 0 0 1 1229.69 588.10 L1229.69 601.10 A39 39 0 0 0 1209.59 673.52Z" fill="#a3e07f"/>
<rect x="1104" y="606" width="47" height="28" fill="#fff"/>
<line x1="1104" y1="620.5" x2="1150" y2="620.5" stroke="#b8dca8" stroke-width="1"/><polyline points="1154,620.5 1170.7,622 1179.6,629" fill="none" stroke="#a3e07f" stroke-width="1"/>
<polyline points="1280.6,653 1290,657.5 1327,657.5" fill="none" stroke="#2a8af6" stroke-width="1"/>
</svg>

<div class="a" style="left:1104px;top:606px;font-size:11.2px;line-height:16px;color:#8fd46c">项目费用</div>
<div class="a" style="left:1104px;top:620px;font-size:12px;line-height:16px;color:#d9272e">41.38%</div>
<div class="a" style="left:1186px;top:622px;font-size:14px;font-weight:bold;line-height:20px;color:#333">51.89</div>
<div class="a" style="left:1186px;top:643px;font-size:12px;font-weight:bold;line-height:16px;color:#333">年度支出</div>
<div class="a" style="left:1300px;top:636px;width:27px;height:40px;overflow:hidden"><div class="a" style="left:10px;top:3px;font-size:13px;line-height:16px;color:#3a8ee6">项目</div><div class="a" style="left:18px;top:19px;font-size:12px;line-height:16px;color:#d9272e">58.62%</div></div>
<div class="a" style="left:924px;top:711px;font-size:12px;line-height:16px;color:#666">累计支出构成（万元）</div>
<div class="a" style="left:1203px;top:717px;font-size:12px;line-height:16px;color:#666">年度支出构成（万元）</div>


<div class="a" style="left:200px;top:742px;width:1137px;height:2px;background:#fff"></div>
<!-- WATERMARK -->
<div class="wm" style="left:59.7px;top:93.2px">中建君联<br>赵玉顺-ouyangzengcheng@75</div>
<div class="wm" style="left:631.1px;top:93.2px">中建君联<br>赵玉顺-ouyangzengcheng@75</div>
<div class="wm" style="left:1202.5px;top:93.2px">中建君联<br>赵玉顺-ouyangzengcheng@75</div>
<div class="wm" style="left:59.7px;top:243.3px">中建君联<br>赵玉顺-ouyangzengcheng@75</div>
<div class="wm" style="left:631.1px;top:243.3px">中建君联<br>赵玉顺-ouyangzengcheng@75</div>
<div class="wm" style="left:1202.5px;top:243.3px">中建君联<br>赵玉顺-ouyangzengcheng@75</div>
<div class="wm" style="left:59.7px;top:393.4px">中建君联<br>赵玉顺-ouyangzengcheng@75</div>
<div class="wm" style="left:631.1px;top:393.4px">中建君联<br>赵玉顺-ouyangzengcheng@75</div>
<div class="wm" style="left:1202.5px;top:393.4px">中建君联<br>赵玉顺-ouyangzengcheng@75</div>
<div class="wm" style="left:59.7px;top:543.5px">中建君联<br>赵玉顺-ouyangzengcheng@75</div>
<div class="wm" style="left:631.1px;top:543.5px">中建君联<br>赵玉顺-ouyangzengcheng@75</div>
<div class="wm" style="left:1202.5px;top:543.5px">中建君联<br>赵玉顺-ouyangzengcheng@75</div>
<div class="wm" style="left:59.7px;top:693.6px">中建君联<br>赵玉顺-ouyangzengcheng@75</div>
<div class="wm" style="left:631.1px;top:693.6px">中建君联<br>赵玉顺-ouyangzengcheng@75</div>
<div class="wm" style="left:1202.5px;top:693.6px">中建君联<br>赵玉顺-ouyangzengcheng@75</div>
<div class="wm" style="left:59.7px;top:843.7px">中建君联<br>赵玉顺-ouyangzengcheng@75</div>
<div class="wm" style="left:631.1px;top:843.7px">中建君联<br>赵玉顺-ouyangzengcheng@75</div>
<div class="wm" style="left:1202.5px;top:843.7px">中建君联<br>赵玉顺-ouyangzengcheng@75</div>

<svg class="a" style="left:0;top:0" width="1340" height="744">
  <rect x="2.5" y="4.5" width="1334" height="736" fill="none" stroke="rgba(0,0,0,0.09)" stroke-width="1"/>
  <rect x="2.5" y="4.5" width="1334" height="736" fill="none" stroke="#1a8ef2" stroke-width="1" stroke-dasharray="6 10"/>
</svg>
<!-- corner brackets -->
<div class="a" style="left:0;top:0;width:31px;height:5px;background:#0aa0fa"></div>
<div class="a" style="left:0;top:0;width:3px;height:33px;background:#0aa0fa"></div>
<div class="a" style="left:1308px;top:0;width:32px;height:4px;background:#0aa0fa"></div>
<div class="a" style="left:1336px;top:0;width:4px;height:33px;background:#0aa0fa"></div>
<div class="a" style="left:0;top:740px;width:31px;height:4px;background:#0aa0fa"></div>
<div class="a" style="left:0;top:712px;width:3px;height:32px;background:#0aa0fa"></div>
<div class="a" style="left:1308px;top:740px;width:32px;height:4px;background:#0aa0fa"></div>
<div class="a" style="left:1336px;top:712px;width:4px;height:32px;background:#0aa0fa"></div>
</body></html>
